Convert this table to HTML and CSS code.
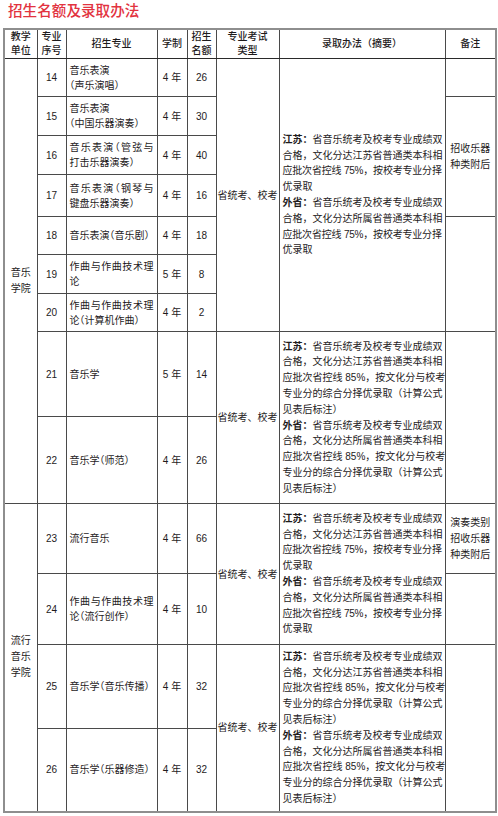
FILE: index.html
```html
<!DOCTYPE html>
<html lang="zh-CN">
<head>
<meta charset="utf-8">
<title>招生名额及录取办法</title>
<link rel="stylesheet" href="styles.css">
</head>
<body>
<div class="title">招生名额及录取办法</div>
<table class="tbl">
  <colgroup>
    <col class="c1"><col class="c2"><col class="c3"><col class="c4"><col class="c5"><col class="c6"><col class="c7"><col class="c8">
  </colgroup>
  <thead>
    <tr class="h-head">
      <th>教学<br>单位</th>
      <th>专业<br>序号</th>
      <th>招生专业</th>
      <th>学制</th>
      <th>招生<br>名额</th>
      <th>专业考试<br>类型</th>
      <th>录取办法（摘要）</th>
      <th>备注</th>
    </tr>
  </thead>
  <tbody>
    <tr class="h38">
      <td class="unit" rowspan="9">音乐<br>学院</td>
      <td class="num">14</td>
      <td class="major">音乐表演<br>（声乐演唱）</td>
      <td class="num">4 年</td>
      <td class="num">26</td>
      <td class="type" rowspan="7">省统考、校考</td>
      <td class="rule" rowspan="7">
        <div class="l"><b>江苏：</b>省音乐统考及校考专业成绩双</div>
        <div class="l">合格，文化分达江苏省普通类本科相</div>
        <div class="l n">应批次省控线 75%，按校考专业分择</div>
        <div class="l e">优录取</div>
        <div class="l"><b>外省：</b>省音乐统考及校考专业成绩双</div>
        <div class="l">合格，文化分达所属省普通类本科相</div>
        <div class="l n">应批次省控线 75%，按校考专业分择</div>
        <div class="l e">优录取</div>
      </td>
      <td class="note"></td>
    </tr>
    <tr class="h39">
      <td class="num">15</td>
      <td class="major">音乐表演<br>（中国乐器演奏）</td>
      <td class="num">4 年</td>
      <td class="num">30</td>
      <td class="note" rowspan="3">招收乐器<br>种类附后</td>
    </tr>
    <tr class="h39">
      <td class="num">16</td>
      <td class="major"><span class="j">音乐表演（管弦与</span>打击乐器演奏）</td>
      <td class="num">4 年</td>
      <td class="num">40</td>
    </tr>
    <tr class="h42">
      <td class="num">17</td>
      <td class="major"><span class="j">音乐表演（钢琴与</span>键盘乐器演奏）</td>
      <td class="num">4 年</td>
      <td class="num">16</td>
    </tr>
    <tr class="h38">
      <td class="num">18</td>
      <td class="major">音乐表演（音乐剧）</td>
      <td class="num">4 年</td>
      <td class="num">18</td>
      <td class="note" rowspan="3"></td>
    </tr>
    <tr class="h39">
      <td class="num">19</td>
      <td class="major"><span class="j">作曲与作曲技术理</span>论</td>
      <td class="num">5 年</td>
      <td class="num">8</td>
    </tr>
    <tr class="h38">
      <td class="num">20</td>
      <td class="major"><span class="j">作曲与作曲技术理</span>论（计算机作曲）</td>
      <td class="num">4 年</td>
      <td class="num">2</td>
    </tr>
    <tr class="h85">
      <td class="num">21</td>
      <td class="major">音乐学</td>
      <td class="num">5 年</td>
      <td class="num">14</td>
      <td class="type" rowspan="2">省统考、校考</td>
      <td class="rule" rowspan="2">
        <div class="l"><b>江苏：</b>省音乐统考及校考专业成绩双</div>
        <div class="l">合格，文化分达江苏省普通类本科相</div>
        <div class="l">应批次省控线 85%，按文化分与校考</div>
        <div class="l">专业分的综合分择优录取（计算公式</div>
        <div class="l e">见表后标注）</div>
        <div class="l"><b>外省：</b>省音乐统考及校考专业成绩双</div>
        <div class="l">合格，文化分达所属省普通类本科相</div>
        <div class="l">应批次省控线 85%，按文化分与校考</div>
        <div class="l">专业分的综合分择优录取（计算公式</div>
        <div class="l e">见表后标注）</div>
      </td>
      <td class="note" rowspan="2"></td>
    </tr>
    <tr class="h87">
      <td class="num">22</td>
      <td class="major">音乐学（师范）</td>
      <td class="num">4 年</td>
      <td class="num">26</td>
    </tr>
    <tr class="h70">
      <td class="unit" rowspan="4">流行<br>音乐<br>学院</td>
      <td class="num">23</td>
      <td class="major">流行音乐</td>
      <td class="num">4 年</td>
      <td class="num">66</td>
      <td class="type" rowspan="2">省统考、校考</td>
      <td class="rule" rowspan="2">
        <div class="l"><b>江苏：</b>省音乐统考及校考专业成绩双</div>
        <div class="l">合格，文化分达江苏省普通类本科相</div>
        <div class="l n">应批次省控线 75%，按校考专业分择</div>
        <div class="l e">优录取</div>
        <div class="l"><b>外省：</b>省音乐统考及校考专业成绩双</div>
        <div class="l">合格，文化分达所属省普通类本科相</div>
        <div class="l n">应批次省控线 75%，按校考专业分择</div>
        <div class="l e">优录取</div>
      </td>
      <td class="note">演奏类别<br>招收乐器<br>种类附后</td>
    </tr>
    <tr class="h71">
      <td class="num">24</td>
      <td class="major"><span class="j">作曲与作曲技术理</span>论（流行创作）</td>
      <td class="num">4 年</td>
      <td class="num">10</td>
      <td class="note"></td>
    </tr>
    <tr class="h84">
      <td class="num">25</td>
      <td class="major">音乐学（音乐传播）</td>
      <td class="num">4 年</td>
      <td class="num">32</td>
      <td class="type" rowspan="2">省统考、校考</td>
      <td class="rule" rowspan="2">
        <div class="l"><b>江苏：</b>省音乐统考及校考专业成绩双</div>
        <div class="l">合格，文化分达江苏省普通类本科相</div>
        <div class="l">应批次省控线 85%，按文化分与校考</div>
        <div class="l">专业分的综合分择优录取（计算公式</div>
        <div class="l e">见表后标注）</div>
        <div class="l"><b>外省：</b>省音乐统考及校考专业成绩双</div>
        <div class="l">合格，文化分达所属省普通类本科相</div>
        <div class="l">应批次省控线 85%，按文化分与校考</div>
        <div class="l">专业分的综合分择优录取（计算公式</div>
        <div class="l e">见表后标注）</div>
      </td>
      <td class="note" rowspan="2"></td>
    </tr>
    <tr class="h83">
      <td class="num">26</td>
      <td class="major">音乐学（乐器修造）</td>
      <td class="num">4 年</td>
      <td class="num">32</td>
    </tr>
  </tbody>
</table>
</body>
</html>
```
FILE: styles.css
```css
html, body {
  margin: 0;
  padding: 0;
  background: #ffffff;
}
body {
  font-family: "Liberation Sans", "Noto Sans CJK SC", sans-serif;
  color: #1e1b1c;
  font-size: 10px;
}
.title {
  height: 28px;
  line-height: 19px;
  padding-left: 8px;
  font-size: 14.6px;
  font-weight: 500;
  color: #e2333f;
  font-family: "Noto Sans CJK SC", sans-serif;
}
.tbl {
  margin-left: 3px;
  width: 492px;
  table-layout: fixed;
  border-collapse: collapse;
  border: 2px solid #8e8e8e;
}
.c1 { width: 33px; }
.c2 { width: 29px; }
.c3 { width: 91px; }
.c4 { width: 30px; }
.c5 { width: 29px; }
.c6 { width: 63px; }
.c7 { width: 166px; }
.c8 { width: 51px; }

.tbl th, .tbl td {
  border: 1px solid #4a4a4a;
  padding: 0;
  font-weight: normal;
  font-size: 10px;
  line-height: 15px;
  vertical-align: middle;
  text-align: center;
  overflow: hidden;
}
.tbl th {
  line-height: 14px;
  font-weight: 500;
  border-bottom-color: #2a2a2a;
}
.h-head { height: 28px; }
.h38 { height: 38px; }
.h39 { height: 39px; }
.h42 { height: 42px; }
.h85 { height: 85px; }
.h87 { height: 87px; }
.h70 { height: 70px; }
.h71 { height: 71px; }
.h84 { height: 84px; }
.h83 { height: 83px; }

.tbl td.unit {
  line-height: 16px;
}
.tbl td.major {
  text-align: left;
  padding: 0 3px;
  font-feature-settings: "halt";
  white-space: nowrap;
}
.j {
  display: block;
  text-align: justify;
  text-align-last: justify;
}
.tbl td.type {
  padding: 0 1px;
  white-space: nowrap;
}
.tbl td.rule {
  text-align: left;
  padding: 0 3px 0 3px;
  line-height: 15.8px;
  white-space: nowrap;
}
.rule b {
  font-weight: bold;
}
.l {
  display: block;
  text-align: justify;
  text-align-last: justify;
}
.l.e {
  text-align-last: left;
}
.l.n {
  letter-spacing: -0.2px;
}
.tbl td.note {
  line-height: 16px;
}
```
